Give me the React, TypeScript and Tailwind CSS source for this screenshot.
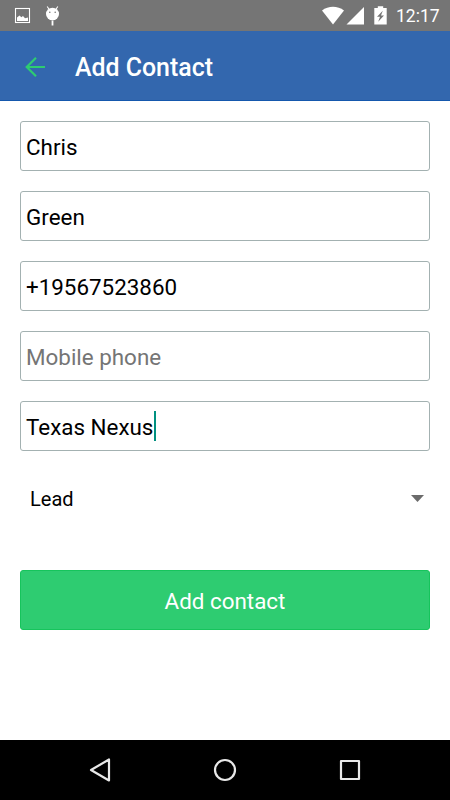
import React from 'react';
import clsx from 'clsx';

interface FieldProps {
  value?: string;
  placeholder?: string;
  focused?: boolean;
}

/**
 * Outlined text field, shows a caret after the value when focused
 */
const Field: React.FC<FieldProps> = ({ value, placeholder, focused }) => (
  <div className="flex h-[50px] items-center rounded-[3px] border border-[#a3b1b1] bg-white pl-[5px] pt-px text-[22.4px]">
    <span className={clsx('whitespace-nowrap pt-0.5', value ? 'text-black' : 'text-[#757575]')}>
      {value || placeholder}
    </span>
    {focused && <span className="-mt-0.5 ml-[0.5px] h-[30px] w-0.5 bg-[#009080]" />}
  </div>
);

const StatusBar: React.FC = () => (
  <div className="flex h-[31px] shrink-0 items-center justify-between bg-[#757575] text-white">
    <svg className="h-[31px] w-[70px]" viewBox="0 0 70 31">
      {/* Picture notification */}
      <rect x="15.5" y="8.5" width="14" height="14" fill="none" stroke="white" strokeWidth="1.1" />
      <path d="M17 21v-3.6l2.5-1.8 1.8 1.6 1.7-1.2 2 2.2 3-.7V21z" fill="white" />
      {/* Debug bug notification */}
      <path d="M47.2 6.5l2 3M57.8 6.5l-2 3" stroke="white" strokeWidth="1.1" />
      <ellipse cx="52.5" cy="14" rx="6.5" ry="6.3" fill="white" />
      <path d="M52.5 20.5v5" stroke="white" strokeWidth="1.8" />
      <circle cx="49.8" cy="12.2" r=".8" fill="#757575" />
      <circle cx="55.2" cy="12.2" r=".8" fill="#757575" />
    </svg>
    <div className="flex items-center pr-[9px]">
      <svg className="h-[31px] w-[70px]" viewBox="320 0 70 31" fill="white">
        <path d="M322 10.4C328.5 5.6 337.5 5.6 344 10.4L333 24.5z" />
        <path d="M364 7v17.5h-17.5z" />
        <path d="M377.8 6.2h5.4v1.9h3.5v16.4h-12.4V8.1h3.5z" />
        <path d="M382.8 10.8l-5.8 6h3l-1.8 5 5.8-6.3h-3z" fill="#757575" />
      </svg>
      <span className="ml-1.5 mt-[3px] w-[45px] whitespace-nowrap text-[17.5px] leading-none">12:17</span>
    </div>
  </div>
);

const Header: React.FC = () => (
  <header className="flex h-[70px] shrink-0 items-center border-b border-[#1558ad] bg-[#3367ae] pl-[25px] pt-px">
    <svg className="mt-px h-[22px] w-[22px]" viewBox="0 0 22 22" fill="none" stroke="#2ecc71" strokeWidth="2.2">
      <path d="M20 11H2M11 1.7L1.7 11l9.3 9.3" />
    </svg>
    <h1 className="ml-7 mt-[5px] whitespace-nowrap text-[24.9px] font-medium leading-none text-white">Add Contact</h1>
  </header>
);

const NavigationBar: React.FC = () => (
  <nav className="flex h-[60px] shrink-0 items-center justify-center gap-[101px] bg-black">
    <svg className="h-6 w-6" viewBox="0 0 24 24" fill="none" stroke="#e8e8e8" strokeWidth="2.2" strokeLinejoin="round">
      <path d="M21 1.5v21L3 12z" />
    </svg>
    <svg className="h-6 w-6" viewBox="0 0 24 24" fill="none" stroke="#e8e8e8" strokeWidth="2.2">
      <circle cx="12" cy="12" r="10" />
    </svg>
    <svg className="h-6 w-6" viewBox="0 0 24 24" fill="none" stroke="#e8e8e8" strokeWidth="2.2" strokeLinejoin="round">
      <rect x="3" y="3" width="18" height="18" />
    </svg>
  </nav>
);

export default function App() {
  const fields: FieldProps[] = [
    { value: 'Chris' },
    { value: 'Green' },
    { value: '+19567523860' },
    { placeholder: 'Mobile phone' },
    { value: 'Texas Nexus', focused: true },
  ];

  return (
    <div className="flex h-screen flex-col bg-white font-[Roboto,sans-serif]">
      <StatusBar />
      <Header />

      <main className="flex flex-1 flex-col px-5 pt-5">
        <div className="flex flex-col gap-5">
          {fields.map((field) => (
            <Field key={field.value || field.placeholder} {...field} />
          ))}
        </div>

        {/* Contact type dropdown */}
        <div className="mt-[23px] flex h-[50px] items-center justify-between pl-2.5 pr-1.5 text-xl text-black">
          <span>Lead</span>
          <svg className="-mt-0.5 h-[7px] w-[13px]" viewBox="0 0 13 7" fill="#6b6b6b">
            <path d="M0 0h13L6.5 7z" />
          </svg>
        </div>

        <button className="mt-[46px] h-[60px] rounded-[3px] border border-[#16c45c] bg-[#2ecc71] pt-1 text-[22.4px] text-white">
          Add contact
        </button>
      </main>

      <NavigationBar />
    </div>
  );
}
